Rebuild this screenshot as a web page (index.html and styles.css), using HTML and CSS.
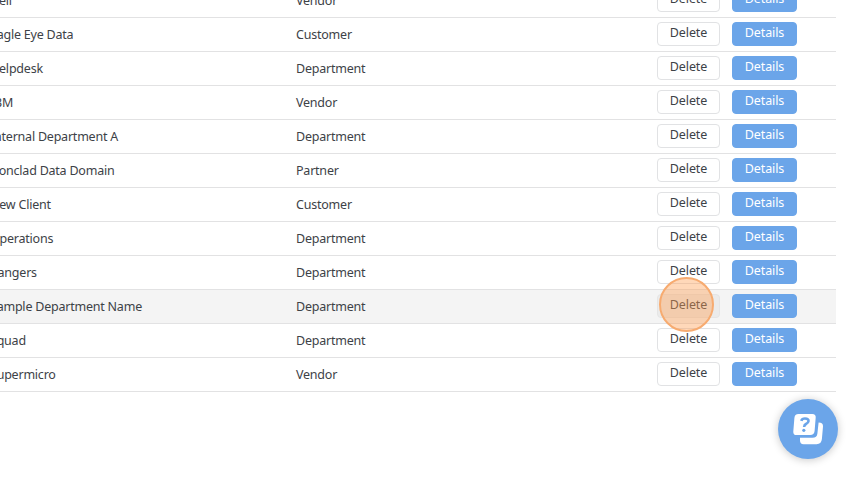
FILE: index.html
```html
<!DOCTYPE html>
<html lang="en">
<head>
<meta charset="utf-8">
<title>Organizations</title>
<link rel="stylesheet" href="styles.css">
</head>
<body>
<main class="list">
  <div class="row"><span class="name">Dell</span><span class="type">Vendor</span><button class="btn">Delete</button><button class="btn primary">Details</button></div>
  <div class="row"><span class="name">Eagle Eye Data</span><span class="type">Customer</span><button class="btn">Delete</button><button class="btn primary">Details</button></div>
  <div class="row"><span class="name">Helpdesk</span><span class="type">Department</span><button class="btn">Delete</button><button class="btn primary">Details</button></div>
  <div class="row"><span class="name">IBM</span><span class="type">Vendor</span><button class="btn">Delete</button><button class="btn primary">Details</button></div>
  <div class="row"><span class="name">Internal Department A</span><span class="type">Department</span><button class="btn">Delete</button><button class="btn primary">Details</button></div>
  <div class="row"><span class="name">Ironclad Data Domain</span><span class="type">Partner</span><button class="btn">Delete</button><button class="btn primary">Details</button></div>
  <div class="row"><span class="name">New Client</span><span class="type">Customer</span><button class="btn">Delete</button><button class="btn primary">Details</button></div>
  <div class="row"><span class="name">Operations</span><span class="type">Department</span><button class="btn">Delete</button><button class="btn primary">Details</button></div>
  <div class="row"><span class="name">Rangers</span><span class="type">Department</span><button class="btn">Delete</button><button class="btn primary">Details</button></div>
  <div class="row active"><span class="name">Sample Department Name</span><span class="type">Department</span><button class="btn">Delete<i class="pointer"></i></button><button class="btn primary">Details</button></div>
  <div class="row"><span class="name">Squad</span><span class="type">Department</span><button class="btn">Delete</button><button class="btn primary">Details</button></div>
  <div class="row"><span class="name">Supermicro</span><span class="type">Vendor</span><button class="btn">Delete</button><button class="btn primary">Details</button></div>
</main>
<button class="help" aria-label="Help">
  <svg width="32" height="34" viewBox="0 0 32 34">
    <path d="M26.600 10.500Q31.300 10.500 31 14.500L29.900 27Q29.400 32.200 24.500 32.200H11.500Q8 32.200 8 28.500V25.800H20.500Q25 25.800 25.400 21.500z" fill="#fff"/>
    <path d="M6.500 2H20.300Q24 2 23.700 5.600L22.600 19Q22.200 23 18.200 23H4.600Q1 23 1.300 19.400L2.400 6Q2.700 2 6.500 2z" fill="#fff"/>
    <path d="M9.300 8.800Q10 6.500 13 6.500Q16.800 6.500 16.500 9.200Q16.300 11 14 12Q12.300 12.900 12.100 15" fill="none" stroke="#6ba5e9" stroke-width="2.600"/>
    <circle cx="11.800" cy="18.300" r="1.600" fill="#6ba5e9"/>
  </svg>
</button>
</body>
</html>
```
FILE: styles.css
```css
* { box-sizing: border-box; }
body {
  margin: 0;
  height: 480px;
  overflow: hidden;
  background: #fff;
  color: #3d4247;
  font: 12.500px/18px "Noto Sans", sans-serif;
}
.list {
  width: 846px;
  margin: -16px 0 0 -10px;
}
.row {
  display: grid;
  grid-template-columns: 306px 361px 63px 77px;
  height: 34px;
  align-items: start;
  border-bottom: 1px solid #e2e2e3;
}
.row.active { background: #f4f4f4; }
.name, .type {
  padding-top: 8px;
  white-space: nowrap;
  letter-spacing: -0.22px;
}
.btn {
  position: relative;
  width: 63px;
  height: 24px;
  margin-top: 4px;
  padding: 0 0 2px;
  border: 1px solid #e1e2e4;
  border-radius: 4px;
  background: #fff;
  color: #3d4247;
  font: inherit;
  line-height: 18px;
  letter-spacing: -0.1px;
}
.btn.primary {
  width: 65px;
  margin-left: 12px;
  border-color: #6ba5e9;
  background: #6ba5e9;
  color: #fff;
}
.active .btn:not(.primary) { background: #ebebeb; border-color: #e5e5e5; }
.pointer {
  position: absolute;
  left: 1px;
  top: -18px;
  width: 55px;
  height: 55px;
  border: 2px solid #f7ab70;
  border-radius: 50%;
  background: rgba(255, 157, 79, 0.4);
  z-index: 2;
}
.help {
  position: fixed;
  left: 778px;
  top: 399px;
  width: 60px;
  height: 60px;
  display: grid;
  place-items: center;
  padding: 0;
  border: 0;
  border-radius: 50%;
  background: #6ba5e9;
  box-shadow: 0 1px 8px rgba(0, 0, 0, 0.22);
}
```
